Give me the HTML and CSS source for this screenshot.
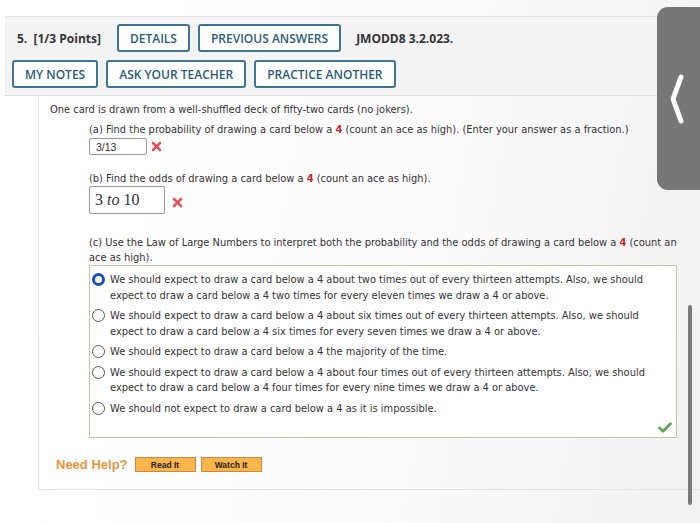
FILE: index.html
```html
<!DOCTYPE html>
<html>
<head>
<meta charset="utf-8">
<link rel="stylesheet" href="styles.css">
</head>
<body>
<div class="page">
  <div class="header">
    <div class="row row1">
      <span class="qnum">5.&nbsp; [1/3 Points]</span>
      <span class="btn">DETAILS</span>
      <span class="btn">PREVIOUS ANSWERS</span>
      <span class="code">JMODD8 3.2.023.</span>
    </div>
    <div class="row row2">
      <span class="btn">MY NOTES</span>
      <span class="btn">ASK YOUR TEACHER</span>
      <span class="btn">PRACTICE ANOTHER</span>
    </div>
  </div>
  <div class="content">
    <p class="intro">One card is drawn from a well-shuffled deck of fifty-two cards (no jokers).</p>
    <div class="part part-a">
      <p>(a) Find the probability of drawing a card below a <b class="red">4</b> (count an ace as high). (Enter your answer as a fraction.)</p>
      <div class="answer">
        <span class="input small"><span>3/13</span></span>
        <svg class="xmark" width="11" height="11" viewBox="0 0 11 11"><path d="M2 2 L9 9 M9 2 L2 9" stroke="#e0555a" stroke-width="2.6" stroke-linecap="round"/></svg>
      </div>
    </div>
    <div class="part part-b">
      <p>(b) Find the odds of drawing a card below a <b class="red">4</b> (count an ace as high).</p>
      <div class="answer">
        <span class="input big"><span>3 <i>to</i> 10</span></span>
        <svg class="xmark" width="11" height="11" viewBox="0 0 11 11"><path d="M2 2 L9 9 M9 2 L2 9" stroke="#e0555a" stroke-width="2.6" stroke-linecap="round"/></svg>
      </div>
    </div>
    <div class="part part-c">
      <p>(c) Use the Law of Large Numbers to interpret both the probability and the odds of drawing a card below a <b class="red">4</b> (count an ace as high).</p>
      <div class="options">
        <div class="opt"><span class="radio on"></span><span class="otext">We should expect to draw a card below a 4 about two times out of every thirteen attempts. Also, we should expect to draw a card below a 4 two times for every eleven times we draw a 4 or above.</span></div>
        <div class="opt"><span class="radio"></span><span class="otext">We should expect to draw a card below a 4 about six times out of every thirteen attempts. Also, we should expect to draw a card below a 4 six times for every seven times we draw a 4 or above.</span></div>
        <div class="opt"><span class="radio"></span><span class="otext">We should expect to draw a card below a 4 the majority of the time.</span></div>
        <div class="opt"><span class="radio"></span><span class="otext">We should expect to draw a card below a 4 about four times out of every thirteen attempts. Also, we should expect to draw a card below a 4 four times for every nine times we draw a 4 or above.</span></div>
        <div class="opt"><span class="radio"></span><span class="otext">We should not expect to draw a card below a 4 as it is impossible.</span></div>
        <svg class="check" width="14" height="11" viewBox="0 0 14 11"><path d="M1.5 6 L5 9.2 L12.5 1.8" fill="none" stroke="#5fa05a" stroke-width="2.8" stroke-linecap="round" stroke-linejoin="round"/></svg>
      </div>
    </div>
    <div class="help">
      <span class="need">Need Help?</span>
      <span class="hbtn">Read It</span>
      <span class="hbtn">Watch It</span>
    </div>
  </div>
  <div class="tab">
    <svg width="16" height="52" viewBox="0 0 16 52"><path d="M12 4 L4 26 L12 48" fill="none" stroke="#fff" stroke-width="5" stroke-linecap="round" stroke-linejoin="round"/></svg>
  </div>
  <div class="scrollbar"></div>
</div>
</body>
</html>
```
FILE: styles.css
```css
html, body {
  margin: 0;
  padding: 0;
}
body {
  width: 700px;
  height: 523px;
  overflow: hidden;
  background: #fff;
  font-family: "DejaVu Sans", Verdana, sans-serif;
  color: #333;
}
.page {
  position: relative;
  width: 700px;
  height: 523px;
  padding-top: 16px;
  box-sizing: border-box;
  background: linear-gradient(100deg, #ffffff 0%, #fbfbfb 60%, #f1f1f1 100%);
}
.header {
  margin: 0 0 0 5px;
  height: 80px;
  background: #f3f3f3;
  border-top: 1px solid #e6e6e6;
  border-bottom: 1px solid #dedede;
  padding: 7px 0 0 7px;
  box-sizing: border-box;
  font-family: "Open Sans", sans-serif;
}
.row {
  display: flex;
  align-items: center;
  height: 28px;
}
.row1 { gap: 8px; }
.row2 { gap: 8px; margin-top: 8px; }
.qnum {
  font-weight: 700;
  font-size: 12px;
  color: #333;
  padding-left: 5px;
  margin-right: 8px;
}
.code {
  font-weight: 700;
  font-size: 12px;
  color: #333;
  margin-left: 7px;
}
.btn {
  display: flex;
  align-items: center;
  height: 28px;
  box-sizing: border-box;
  padding: 0 11px;
  border: 2px solid #3f7590;
  border-radius: 3px;
  background: #fff;
  color: #2c5c78;
  font-weight: 600;
  font-size: 12px;
}
.content {
  margin-left: 38px;
  border-left: 1px solid #e3e3e3;
  border-bottom: 1px solid #e3e3e3;
  height: 394px;
  box-sizing: border-box;
  padding: 6px 0 0 11px;
  font-size: 9.9px;
  color: #333;
}
.content p { margin: 0; line-height: 15px; }
.red { color: #c0282d; font-weight: 700; }
.part { margin-left: 39px; }
.part-a { margin-top: 5px; }
.answer { display: flex; align-items: center; }
.input {
  display: inline-flex;
  align-items: center;
  box-sizing: border-box;
  border: 1px solid #999;
  background: #fff;
  border-radius: 2px;
}
.input.small {
  width: 58px;
  height: 17px;
  margin-top: 1px;
  padding-left: 6px;
  font-family: "Liberation Sans", Arial, sans-serif;
  font-size: 10.5px;
  color: #333;
}
.input.big {
  width: 76px;
  height: 28px;
  padding-left: 5px;
  font-family: "Liberation Serif", "Times New Roman", serif;
  font-size: 16px;
  color: #333;
}
.xmark { margin-left: 9px; }
.part-a .xmark { margin-left: 4px; margin-top: 1px; }
.part-b .xmark { margin-left: 7px; margin-top: 5px; }
.part-b { margin-top: 16px; }
.part-b .answer { margin-top: 0; }
.part-c { margin-top: 21px; margin-right: 23px; }
.options {
  position: relative;
  margin-top: 0;
  border: 1px solid #b9cca0;
  background: #fff;
  height: 173px;
  box-sizing: border-box;
  padding: 6px 0 0 2px;
}
.opt {
  display: flex;
  align-items: flex-start;
  margin-bottom: 5px;
  line-height: 15.5px;
}
.radio {
  flex: none;
  width: 13px;
  height: 13px;
  box-sizing: border-box;
  border: 1.2px solid #555;
  border-radius: 50%;
  margin-top: 1px;
  margin-right: 5px;
  background: #fff;
}
.radio.on {
  border: 3.8px solid #1b4fbf;
  background: #fff;
}
.otext {
  padding-right: 28px;
}
.check {
  position: absolute;
  right: 4px;
  bottom: 4px;
}
.help {
  display: flex;
  align-items: center;
  margin: 19px 0 0 6px;
  gap: 5px;
}
.need {
  font-family: "Liberation Sans", Arial, sans-serif;
  font-weight: 700;
  font-size: 13px;
  color: #e5953c;
  margin-right: 2px;
}
.hbtn {
  display: inline-flex;
  align-items: center;
  justify-content: center;
  width: 61px;
  height: 15px;
  box-sizing: border-box;
  background: #fbb549;
  border: 1px solid #c8874c;
  font-family: "Liberation Sans", Arial, sans-serif;
  font-weight: 700;
  font-size: 8.5px;
  color: #222;
}
.tab {
  position: absolute;
  left: 657px;
  top: 7px;
  width: 50px;
  height: 183px;
  background: #777;
  border-radius: 11px 0 0 11px;
  display: flex;
  align-items: center;
  padding-left: 12px;
  box-sizing: border-box;
}
.scrollbar {
  position: absolute;
  left: 688px;
  top: 305px;
  width: 4px;
  height: 200px;
  border-radius: 2px;
  background: #7a7a7a;
}
```
